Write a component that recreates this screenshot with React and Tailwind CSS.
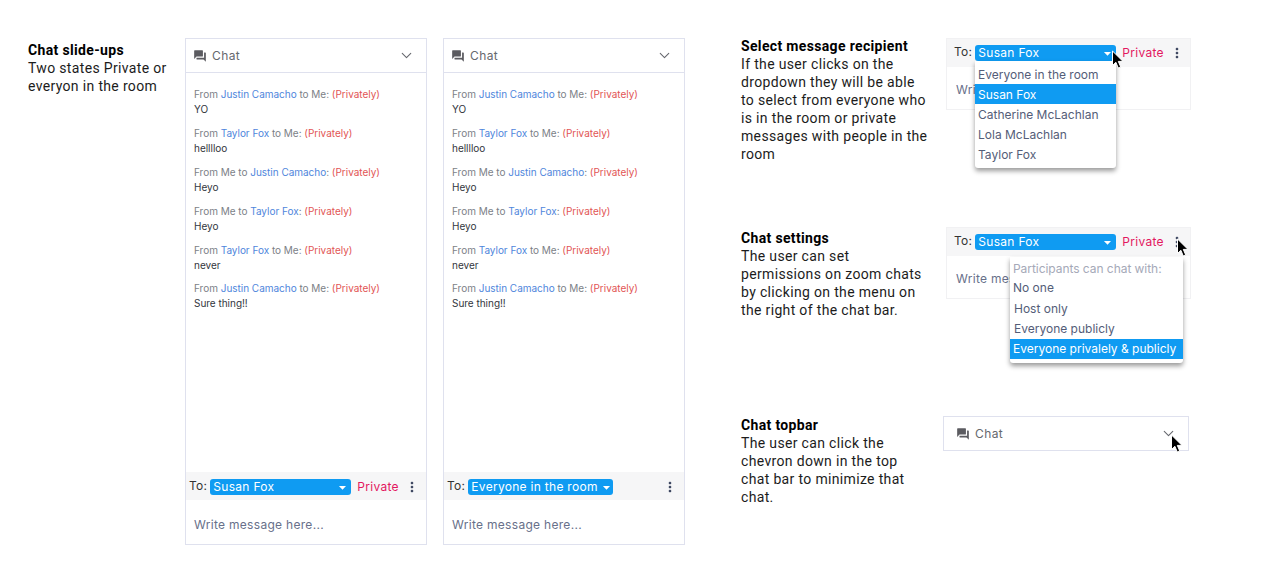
import { ChevronDown } from "lucide-react";
import { MdQuestionAnswer, MdMoreVert, MdArrowDropDown } from "react-icons/md";

const messages = [
  { before: "From ", name: "Justin Camacho", after: " to Me: ", text: "YO" },
  { before: "From ", name: "Taylor Fox", after: " to Me: ", text: "helllloo" },
  { before: "From Me to ", name: "Justin Camacho", after: ": ", text: "Heyo" },
  { before: "From Me to ", name: "Taylor Fox", after: ": ", text: "Heyo" },
  { before: "From ", name: "Taylor Fox", after: " to Me: ", text: "never" },
  { before: "From ", name: "Justin Camacho", after: " to Me: ", text: "Sure thing!!" },
];

function Cursor({ className }) {
  return (
    <svg className={className} width="14" height="20" viewBox="0 0 14 20">
      <path
        d="M1.5 1v14.5l3.4-3.2 2.3 5.6 2.5-1-2.4-5.5h4.7z"
        fill="#000"
        stroke="#fff"
        strokeWidth="1"
      />
    </svg>
  );
}

function ChatHeader({ className }) {
  return (
    <div className={`flex items-center justify-between border-[#dfe1ee] ${className}`}>
      <div className="flex items-center gap-[5px] text-[12px] tracking-[0.4px] text-[#66686e]">
        <MdQuestionAnswer size={14} className="text-[#5b5b60]" />
        <span>Chat</span>
      </div>
      <ChevronDown size={17} strokeWidth={1.5} className="text-[#66686e]" />
    </div>
  );
}

function ToBar({ label = "Susan Fox", pill = "w-[141px]", inset = "pl-[3px] pr-[6px] pt-[2px]", showPrivate = true }) {
  return (
    <div className={`flex h-[28px] items-center bg-[#f6f6f7] text-[12px] tracking-[0.29px] ${inset}`}>
      <span className="mr-[3px] -mt-[2px] text-[#333]">To:</span>
      <div className={`flex h-[16px] items-center justify-between whitespace-nowrap rounded-[3px] bg-[#0f9bf2] pl-[3px] text-white ${pill}`}>
        <span>{label}</span>
        <MdArrowDropDown size={17} className="shrink-0" />
      </div>
      {showPrivate && <span className="ml-[6px] text-[#e3175f]">Private</span>}
      <MdMoreVert size={16} className="ml-auto text-[#3d4660]" />
    </div>
  );
}

function ChatPanel({ label, pill, showPrivate }) {
  return (
    <div className="flex h-[507px] w-[242px] flex-col border border-[#dfe1ee] font-['Inter',sans-serif]">
      <ChatHeader className="h-[34px] shrink-0 border-b pl-[7px] pr-[11px]" />
      <div className="flex-1 pl-[8px] pt-[14px] text-[10px] leading-[15px] tracking-[-0.02px]">
        {messages.map((m, i) => (
          <div key={i} className="mb-[8.9px]">
            <p className="text-[#7c7f87]">
              {m.before}
              <span className="text-[#4f86dc]">{m.name}</span>
              {m.after}
              <span className="text-[#e25555]">(Privately)</span>
            </p>
            <p className="text-[#33363d]">{m.text}</p>
          </div>
        ))}
      </div>
      <ToBar label={label} pill={pill} showPrivate={showPrivate} />
      <div className="flex h-[44px] items-center pl-[8px] pt-[6px] text-[12px] tracking-[0.3px] text-[#68708a]">
        Write message here...
      </div>
    </div>
  );
}

function Note({ title, lines, className }) {
  return (
    <div className={`font-['Roboto',sans-serif] text-[14px] leading-[18px] tracking-[0.34px] text-[#1c1c1c] ${className}`}>
      <p className="font-bold text-black">{title}</p>
      {lines.map((line) => (
        <p key={line}>{line}</p>
      ))}
    </div>
  );
}

function MiniChat({ children }) {
  return (
    <div className="relative h-[72px] w-[245px] border border-[#f1f1f3] font-['Inter',sans-serif]">
      <ToBar inset="pl-[7px] pr-[5px]" />
      <div className="pl-[9px] pt-[14px] text-[12px] tracking-[0.3px] text-[#68708a]">Write message here...</div>
      {children}
    </div>
  );
}

export default function App() {
  return (
    <div className="flex h-[586px] w-[1271px] overflow-hidden bg-white pl-[28px] pt-[38px]">
      <Note
        className="mt-[3px] w-[157px]"
        title="Chat slide-ups"
        lines={["Two states Private or", "everyon in the room"]}
      />
      <div className="flex gap-[16px]">
        <ChatPanel label="Susan Fox" pill="w-[141px]" showPrivate />
        <ChatPanel label="Everyone in the room" pill="w-[145px]" showPrivate={false} />
      </div>

      <div className="ml-[56px] flex w-[450px] flex-col">
        {/* recipient dropdown */}
        <div className="flex h-[189px]">
          <Note
            className="-mt-[1px] w-[205px]"
            title="Select message recipient"
            lines={[
              "If the user clicks on the",
              "dropdown they will be able",
              "to select from everyone who",
              "is in the room or private",
              "messages with people in the",
              "room",
            ]}
          />
          <MiniChat>
            <div className="absolute left-[28px] top-[22px] h-[107px] w-[141px] rounded-b-[3px] bg-white pt-[3px] text-[12px] text-[#545d78] shadow-[0_3px_5px_rgba(0,0,0,0.4)]">
              {["Everyone in the room", "Susan Fox", "Catherine McLachlan", "Lola McLachlan", "Taylor Fox"].map((name) => (
                <div
                  key={name}
                  className={`flex h-[20px] items-center pl-[3px] pt-[2px] ${name === "Susan Fox" ? "bg-[#0f9bf2] text-white" : ""}`}
                >
                  {name}
                </div>
              ))}
            </div>
            <Cursor className="absolute left-[164px] top-[11px]" />
          </MiniChat>
        </div>

        {/* settings menu */}
        <div className="flex h-[189px]">
          <Note
            className="mt-[2px] w-[205px]"
            title="Chat settings"
            lines={[
              "The user can set",
              "permissions on zoom chats",
              "by clicking on the menu on",
              "the right of the chat bar.",
            ]}
          />
          <MiniChat>
            <div className="absolute left-[63px] top-[29px] h-[106px] w-[173px] rounded-b-[3px] bg-white pt-[3px] text-[12px] text-[#545d78] shadow-[0_3px_5px_rgba(0,0,0,0.4)]">
              <div className="flex h-[18px] items-center pl-[3px] tracking-[-0.05px] text-[#a5a9b8]">Participants can chat with:</div>
              <div className="flex h-[20px] items-center pl-[3px]">No one</div>
              <div className="flex h-[21px] items-center pl-[4px]">Host only</div>
              <div className="flex h-[20px] items-center pl-[4px]">Everyone publicly</div>
              <div className="flex h-[20px] items-center bg-[#0f9bf2] pl-[3px] text-white">Everyone privalely &amp; publicly</div>
            </div>
            <Cursor className="absolute left-[229px] top-[10px]" />
          </MiniChat>
        </div>

        {/* topbar */}
        <div className="flex">
          <Note
            className="w-[202px]"
            title="Chat topbar"
            lines={["The user can click the", "chevron down in the top", "chat bar to minimize that", "chat."]}
          />
          <div className="relative h-[35px] w-[246px] font-['Inter',sans-serif]">
            <ChatHeader className="h-[35px] border pl-[12px] pr-[11px]" />
            <Cursor className="absolute left-[227px] top-[18px]" />
          </div>
        </div>
      </div>
    </div>
  );
}
